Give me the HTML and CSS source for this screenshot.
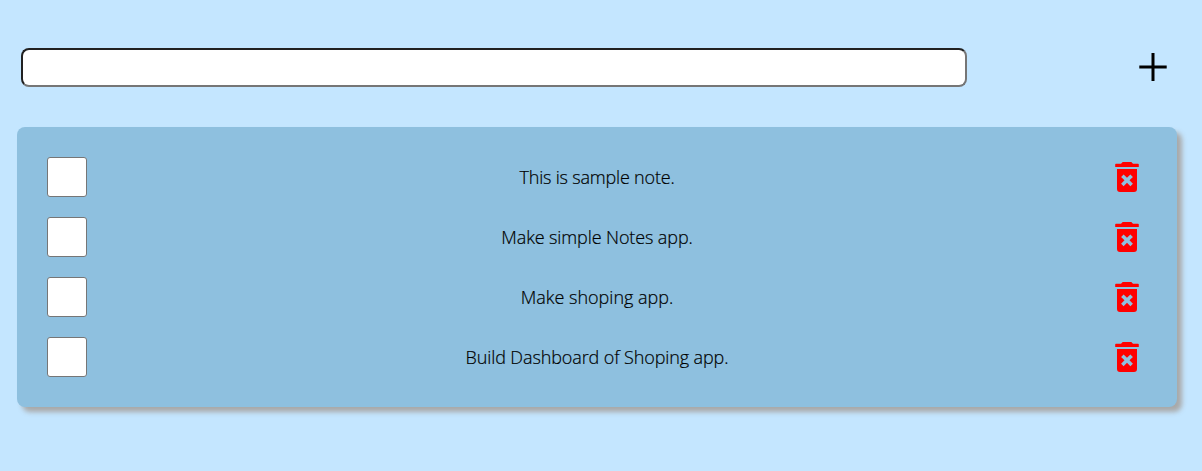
FILE: index.html
```html
<!DOCTYPE html>
<html lang="en">
<head>
<meta charset="utf-8">
<title>Notes</title>
<link rel="stylesheet" href="styles.css">
</head>
<body>
<svg class="sprite" aria-hidden="true">
  <symbol id="trash" viewBox="0 0 40 40">
    <path d="M9 6.7H14L15.7 5H24.3L26 6.7H31a.8 .8 0 0 1 .8 .8V10H8.2V7.5a.8 .8 0 0 1 .8-.8Z"/>
    <path fill-rule="evenodd" d="M10 12H30V32a3 3 0 0 1-3 3H13a3 3 0 0 1-3-3ZM20 20.8l-3.4-3.4-2.5 2.5 3.4 3.4-3.4 3.4 2.5 2.5 3.4-3.4 3.4 3.4 2.5-2.5-3.4-3.4 3.4-3.4-2.5-2.5Z"/>
  </symbol>
</svg>
<form class="add">
  <input class="add-input" type="text" aria-label="New note">
  <button class="add-button" type="button" aria-label="Add">
    <svg class="icon" viewBox="0 0 40 40"><path d="M18.5 6H21.5V18.5H33.7V21.5H21.5V34H18.5V21.5H6.3V18.5H18.5Z"/></svg>
  </button>
</form>
<ul class="notes">
  <li class="note"><input class="check" type="checkbox" aria-label="Done"><p class="text tight">This is sample note.</p><svg class="icon delete"><use href="#trash"/></svg></li>
  <li class="note"><input class="check" type="checkbox" aria-label="Done"><p class="text snug">Make simple Notes app.</p><svg class="icon delete"><use href="#trash"/></svg></li>
  <li class="note"><input class="check" type="checkbox" aria-label="Done"><p class="text">Make shoping app.</p><svg class="icon delete"><use href="#trash"/></svg></li>
  <li class="note"><input class="check" type="checkbox" aria-label="Done"><p class="text snug">Build Dashboard of Shoping app.</p><svg class="icon delete"><use href="#trash"/></svg></li>
</ul>
</body>
</html>
```
FILE: styles.css
```css
* { box-sizing: border-box; margin: 0; padding: 0; }
body {
  min-height: 100vh;
  background: #c4e6ff;
  font-family: "Open Sans", "Noto Sans", sans-serif;
  padding: 47px 25px 0 17px;
}
.sprite { display: none; }
.add {
  display: flex;
  align-items: center;
  justify-content: space-between;
  height: 40px;
  padding: 0 4px;
}
.add-input {
  width: 946px;
  height: 39px;
  border: 2px inset #767676;
  border-radius: 8px;
  background: #fff;
}
.add-button {
  width: 40px;
  height: 40px;
  border: 0;
  background: none;
}
.icon { display: block; width: 40px; height: 40px; }
.notes {
  list-style: none;
  display: flex;
  flex-direction: column;
  gap: 20px;
  margin-top: 40px;
  padding: 30px;
  height: 280px;
  border-radius: 8px;
  background: #8ec0df;
  box-shadow: 5px 5px 5px darkgrey;
}
.note {
  display: flex;
  align-items: center;
  justify-content: space-between;
  height: 40px;
}
.check {
  appearance: none;
  width: 40px;
  height: 40px;
  border: 1px solid #767676;
  border-radius: 3px;
  background: #fff;
}
.text {
  font-size: 18px;
  font-weight: 300;
  line-height: 24px;
  color: #000;
  white-space: nowrap;
  -webkit-text-stroke: 0.2px #000;
}
.snug { letter-spacing: -0.11px; }
.tight { letter-spacing: -0.19px; }
.delete { fill: #f00; }
```
